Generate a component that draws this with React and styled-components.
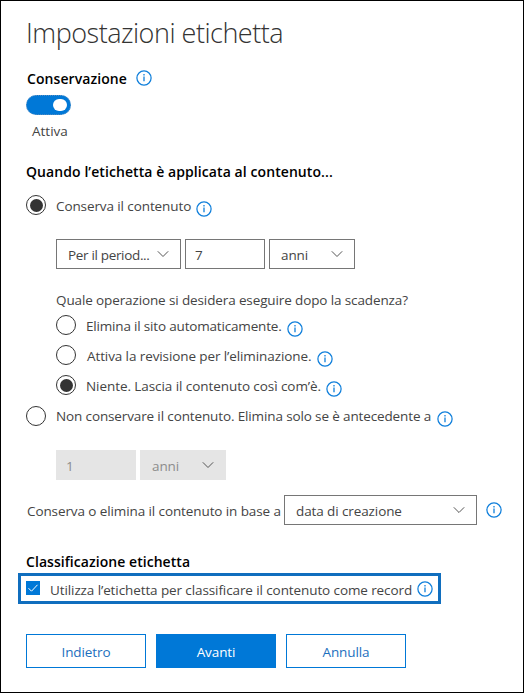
import React from 'react';
import styled, { createGlobalStyle } from 'styled-components';

const GlobalStyle = createGlobalStyle`
  *, *::before, *::after { box-sizing: border-box; }
  body { margin: 0; background: #fff; }
`;

const Panel = styled.main`
  width: 524px;
  height: 693px;
  padding: 12px 0 0 25px;
  border: 1px solid #000;
  background: #fff;
  color: #444;
  font: 400 13.5px/20px 'Open Sans', 'Noto Sans', sans-serif;
  letter-spacing: -0.1px;
  white-space: nowrap;
  overflow: hidden;
`;

const Title = styled.h1`
  margin: 0 0 15px;
  color: #333;
  font-size: 27px;
  font-weight: 300;
  line-height: 40px;
  letter-spacing: -0.49px;
`;

const SectionHeader = styled.div`
  display: flex;
  align-items: center;
  gap: 9px;
  height: 20px;
  padding-left: 1px;
`;

const SectionTitle = styled.h2`
  margin: 0;
  padding-top: ${(p) => p.$drop || 0};
  color: #000;
  font-size: 14px;
  font-weight: 600;
  line-height: 20px;
  letter-spacing: ${(p) => p.$track || '0.08px'};
`;

const ToggleTrack = styled.button`
  display: flex;
  align-items: center;
  justify-content: flex-end;
  width: 45px;
  height: 20px;
  margin: 7px 0 6px;
  padding: 0 3px;
  border: 1px dotted #5b8fc0;
  border-radius: 10px;
  background: #0078d7;
`;

const ToggleKnob = styled.span`
  width: 14px;
  height: 12px;
  border-radius: 6px;
  background: #fff;
`;

const ToggleState = styled.div`
  margin-bottom: 21px;
  padding-left: 6px;
  letter-spacing: 0;
`;

const OptionRow = styled.label`
  display: flex;
  align-items: center;
  height: 30px;
  margin-left: ${(p) => (p.$nested ? '30px' : 0)};
`;

const KeepOption = styled.div`
  margin: 8px 0 19px;
`;

const DiscardOption = styled.div`
  padding-top: 1px;
`;

const RadioRing = styled.span`
  display: grid;
  place-items: center;
  flex: none;
  width: 20px;
  height: 20px;
  margin-right: 10px;
  border: 1.5px solid #333;
  border-radius: 50%;

  &::after {
    content: '';
    width: 13px;
    height: 13px;
    border-radius: 50%;
    background: ${(p) => (p.$checked ? '#333' : 'transparent')};
  }
`;

const OptionText = styled.span`
  padding: ${(p) => p.$drop || '2px'} 0 0 ${(p) => p.$indent || 0};
  letter-spacing: ${(p) => p.$track || '-0.1px'};
`;

const InfoGlyph = styled.svg`
  display: block;
  flex: none;
  width: 16px;
  height: 16px;
  margin: ${(p) => p.$margin || 0};
`;

const FieldRow = styled.div`
  display: flex;
  gap: 4px;
  height: 30px;
  margin: ${(p) => p.$margin};
`;

const Field = styled.div`
  display: flex;
  align-items: center;
  justify-content: space-between;
  width: ${(p) => p.$width};
  height: 30px;
  padding: 1px 11px 0 ${(p) => p.$left || '11px'};
  border: 1px solid ${(p) => (p.$disabled ? '#e5e5e5' : '#767676')};
  background: ${(p) => (p.$disabled ? '#e5e5e5' : '#fff')};
  color: ${(p) => (p.$disabled ? '#8c8c8c' : '#444')};
`;

const FieldValue = styled.span`
  letter-spacing: ${(p) => p.$track || '-0.1px'};
`;

const ChevronGlyph = styled.svg`
  display: block;
  flex: none;
  width: 12px;
  height: 8px;
  margin-top: -2px;
`;

const Question = styled.div`
  margin-left: 30px;
  letter-spacing: -0.12px;
`;

const BasisRow = styled.div`
  display: flex;
  align-items: center;
  height: 30px;
  margin: 15px 0 27px;
`;

const BasisLabel = styled.span`
  width: 258px;
  padding: 2px 0 0 1px;
`;

const RecordOption = styled.label`
  display: flex;
  align-items: center;
  width: 423px;
  height: 31px;
  margin: 1px 0 30px -8px;
  padding: 0 0 0 5px;
  border: 3px solid #106ebe;
`;

const CheckBox = styled.span`
  display: grid;
  place-items: center;
  width: 14px;
  height: 14px;
  margin: 0 10px 1px 0;
  background: #0078d7;
`;

const CheckGlyph = styled.svg`
  display: block;
  width: 12px;
  height: 12px;
`;

const ButtonBar = styled.footer`
  display: flex;
  gap: 10px;
`;

const Button = styled.button`
  width: 120px;
  height: 34px;
  padding: 2px 0 0;
  border: 1px solid #0078d7;
  background: ${(p) => (p.$primary ? '#0078d7' : '#fff')};
  color: ${(p) => (p.$primary ? '#fff' : '#1c6fbe')};
  font: inherit;
  font-weight: ${(p) => (p.$primary ? 500 : 400)};
  letter-spacing: inherit;
`;

function Info({ margin }) {
  return (
    <InfoGlyph viewBox="0 0 16 16" $margin={margin}>
      <circle cx="8" cy="8" r="7.1" fill="none" stroke="#0f7fdb" strokeWidth="1.25" />
      <path d="M8 6.5V11.3" stroke="#0f7fdb" strokeWidth="1.3" />
      <path d="M8 4.1V5.4" stroke="#0f7fdb" strokeWidth="1.3" />
    </InfoGlyph>
  );
}

function Chevron() {
  return (
    <ChevronGlyph viewBox="0 0 12 8">
      <path d="M.8 1.3 6 6.5 11.2 1.3" fill="none" stroke="#555" strokeWidth="1" />
    </ChevronGlyph>
  );
}

function Radio({ nested, checked, indent, track, drop, infoMargin, children }) {
  return (
    <OptionRow $nested={nested}>
      <RadioRing $checked={checked} />
      <OptionText $indent={indent} $track={track} $drop={drop}>{children}</OptionText>
      <Info margin={infoMargin} />
    </OptionRow>
  );
}

function Select({ value, track, ...rest }) {
  return (
    <Field {...rest}>
      <FieldValue $track={track}>{value}</FieldValue>
      <Chevron />
    </Field>
  );
}

export default function App() {
  return (
    <>
      <GlobalStyle />
      <Panel>
        <Title>Impostazioni etichetta</Title>

        <SectionHeader>
          <SectionTitle $drop="2px">Conservazione</SectionTitle>
          <Info />
        </SectionHeader>
        <ToggleTrack><ToggleKnob /></ToggleTrack>
        <ToggleState>Attiva</ToggleState>

        <SectionTitle>Quando l’etichetta è applicata al contenuto...</SectionTitle>
        <KeepOption>
          <Radio checked infoMargin="7px 0 0 5px">Conserva il contenuto</Radio>
        </KeepOption>

        <FieldRow $margin="0 0 21px 30px">
          <Select $width="125px" value="Per il period..." track="-0.33px" />
          <Field $width="80px" $left="9px">7</Field>
          <Select $width="86px" value="anni" />
        </FieldRow>

        <Question>Quale operazione si desidera eseguire dopo la scadenza?</Question>
        <Radio nested track="-0.18px" infoMargin="7px 0 0 5px">Elimina il sito automaticamente.</Radio>
        <Radio nested indent="1px" infoMargin="7px 0 0 6px">Attiva la revisione per l’eliminazione.</Radio>
        <Radio nested checked track="-0.07px" infoMargin="8px 0 0 5px">Niente. Lascia il contenuto così com’è.</Radio>
        <DiscardOption>
          <Radio track="-0.13px" drop="0px" infoMargin="6px 0 0 6px">
            Non conservare il contenuto. Elimina solo se è antecedente a
          </Radio>
        </DiscardOption>

        <FieldRow $margin="19px 0 0 30px">
          <Field $width="80px" $left="9px" $disabled>1</Field>
          <Select $width="86px" $disabled value="anni" />
        </FieldRow>

        <BasisRow>
          <BasisLabel>Conserva o elimina il contenuto in base a</BasisLabel>
          <Select $width="193px" value="data di creazione" />
          <Info margin="0 0 1px 9px" />
        </BasisRow>

        <SectionTitle $track="0.05px">Classificazione etichetta</SectionTitle>
        <RecordOption>
          <CheckBox>
            <CheckGlyph viewBox="0 0 12 12">
              <path d="M1.5 6.2 4.5 9.2 10.5 2.8" fill="none" stroke="#fff" strokeWidth="1" />
            </CheckGlyph>
          </CheckBox>
          <OptionText>Utilizza l’etichetta per classificare il contenuto come record</OptionText>
          <Info margin="0 0 0 5px" />
        </RecordOption>

        <ButtonBar>
          <Button>Indietro</Button>
          <Button $primary>Avanti</Button>
          <Button>Annulla</Button>
        </ButtonBar>
      </Panel>
    </>
  );
}
